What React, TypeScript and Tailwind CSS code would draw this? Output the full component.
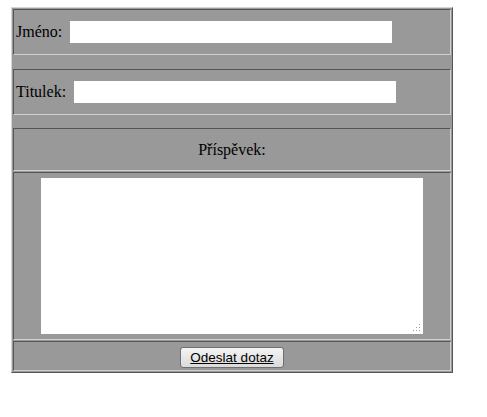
import React from "react";

const serif = "font-['Liberation_Serif',_'Times_New_Roman',_serif]";

function Cell({ className, children }: { className?: string; children?: React.ReactNode }) {
  return (
    <div
      className={`border border-t-[#555555] border-l-[#555555] border-b-[#d0d0d0] border-r-[#d0d0d0] ${className ?? ""}`}
    >
      {children}
    </div>
  );
}

function Grip() {
  const dots = [
    [8, 0],
    [5, 3],
    [8, 3],
    [2, 6],
    [5, 6],
    [8, 6],
  ];
  return (
    <svg className="absolute bottom-[2px] right-[2px]" width="10" height="8" viewBox="0 0 10 8">
      {dots.map(([x, y]) => (
        <rect key={`${x}-${y}`} x={x} y={y} width="1" height="1" fill="#9a9a9a" />
      ))}
    </svg>
  );
}

export default function App() {
  return (
    <div className={`min-h-[417px] bg-white pt-[7px] pl-[11px] ${serif} text-[16px] text-black`}>
      <div className="flex w-[442px] flex-col border border-t-[#d4d4d4] border-l-[#d4d4d4] border-b-[#555555] border-r-[#555555] bg-[#999999] p-[1px]">
        <Cell className="flex h-[46px] items-center pl-[2px]">
          <span>Jméno:</span>
          <input type="text" className="ml-[8px] h-[22px] w-[322px] border-0 bg-white outline-none" />
        </Cell>

        <Cell className="mt-[14px] flex h-[46px] items-center pl-[2px]">
          <span>Titulek:</span>
          <input type="text" className="ml-[8px] h-[22px] w-[322px] border-0 bg-white outline-none" />
        </Cell>

        <Cell className="mt-[13px] flex h-[43px] items-center justify-center">
          <span>Příspěvek:</span>
        </Cell>

        <Cell className="mt-[1px] flex h-[168px] items-center justify-center">
          <div className="relative h-[156px] w-[382px] bg-white">
            <textarea className="block h-full w-full resize-none border-0 bg-white outline-none" />
            <Grip />
          </div>
        </Cell>

        <Cell className="mt-[1px] flex h-[30px] items-center justify-center pt-[3px]">
          <button
            type="button"
            className="h-[21px] w-[104px] rounded-[3px] border border-[#707070] bg-gradient-to-b from-[#f4f4f4] to-[#dadada] font-['Liberation_Sans',_Arial,_sans-serif] text-[13.5px] leading-none text-black underline"
          >
            Odeslat dotaz
          </button>
        </Cell>
      </div>
    </div>
  );
}
